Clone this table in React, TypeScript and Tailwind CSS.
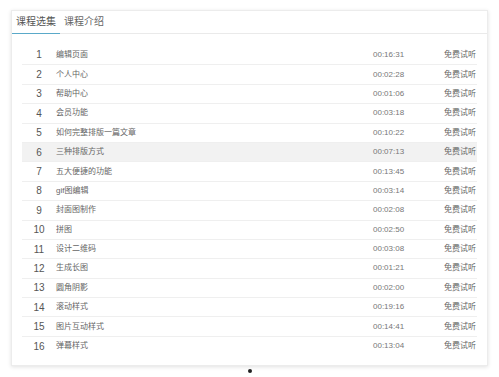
const lessons = [
  { title: "编辑页面", time: "00:16:31" },
  { title: "个人中心", time: "00:02:28" },
  { title: "帮助中心", time: "00:01:06" },
  { title: "会员功能", time: "00:03:18" },
  { title: "如何完整排版一篇文章", time: "00:10:22" },
  { title: "三种排版方式", time: "00:07:13" },
  { title: "五大便捷的功能", time: "00:13:45" },
  { title: "gif图编辑", time: "00:03:14" },
  { title: "封面图制作", time: "00:02:08" },
  { title: "拼图", time: "00:02:50" },
  { title: "设计二维码", time: "00:03:08" },
  { title: "生成长图", time: "00:01:21" },
  { title: "圆角阴影", time: "00:02:00" },
  { title: "滚动样式", time: "00:19:16" },
  { title: "图片互动样式", time: "00:14:41" },
  { title: "弹幕样式", time: "00:13:04" },
];

const cjk = "font-['Liberation_Sans','Noto_Sans_CJK_SC',sans-serif]";

export default function App() {
  return (
    <div className={`w-[499px] h-[377px] bg-white ${cjk} text-[#555] overflow-hidden`}>
      <div className="pt-[10px] pl-[11px]">
        {/* 卡片 */}
        <div className="w-[477px] h-[356px] bg-white border border-[#ececec] shadow-[0_1px_4px_rgba(0,0,0,0.12)] flex flex-col">
          {/* 标签页 */}
          <div className="flex h-[23px] border-b border-[#eaeaea]">
            <div className="px-1 text-[10px] leading-[21px] text-[#555] border-b-[1.5px] border-[#5aa9c9] -mb-px">
              课程选集
            </div>
            <div className="px-1 text-[10px] leading-[21px] text-[#666]">课程介绍</div>
          </div>

          {/* 课程列表 */}
          <div className="px-[10px] pt-[11px]">
            {lessons.map((l, i) => (
              <div
                key={i}
                className={`flex items-center h-[19.4px] ${i > 0 ? "border-t border-[#efefef]" : ""} ${i === 5 ? "bg-[#f2f2f2]" : ""}`}
              >
                <span className="w-[34px] text-center text-[10px] text-[#555]">{i + 1}</span>
                <span className="flex-1 text-[8px] text-[#666]">{l.title}</span>
                <span className="w-[70px] text-[8px] text-[#777]">{l.time}</span>
                <span className="w-[34px] text-right pr-px text-[8px] text-[#666]">免费试听</span>
              </div>
            ))}
          </div>
        </div>
        {/* 分页圆点 */}
        <div className="w-[477px] flex justify-center mt-[3px]">
          <span className="w-[4px] h-[4px] rounded-full bg-[#222]" />
        </div>
      </div>
    </div>
  );
}
